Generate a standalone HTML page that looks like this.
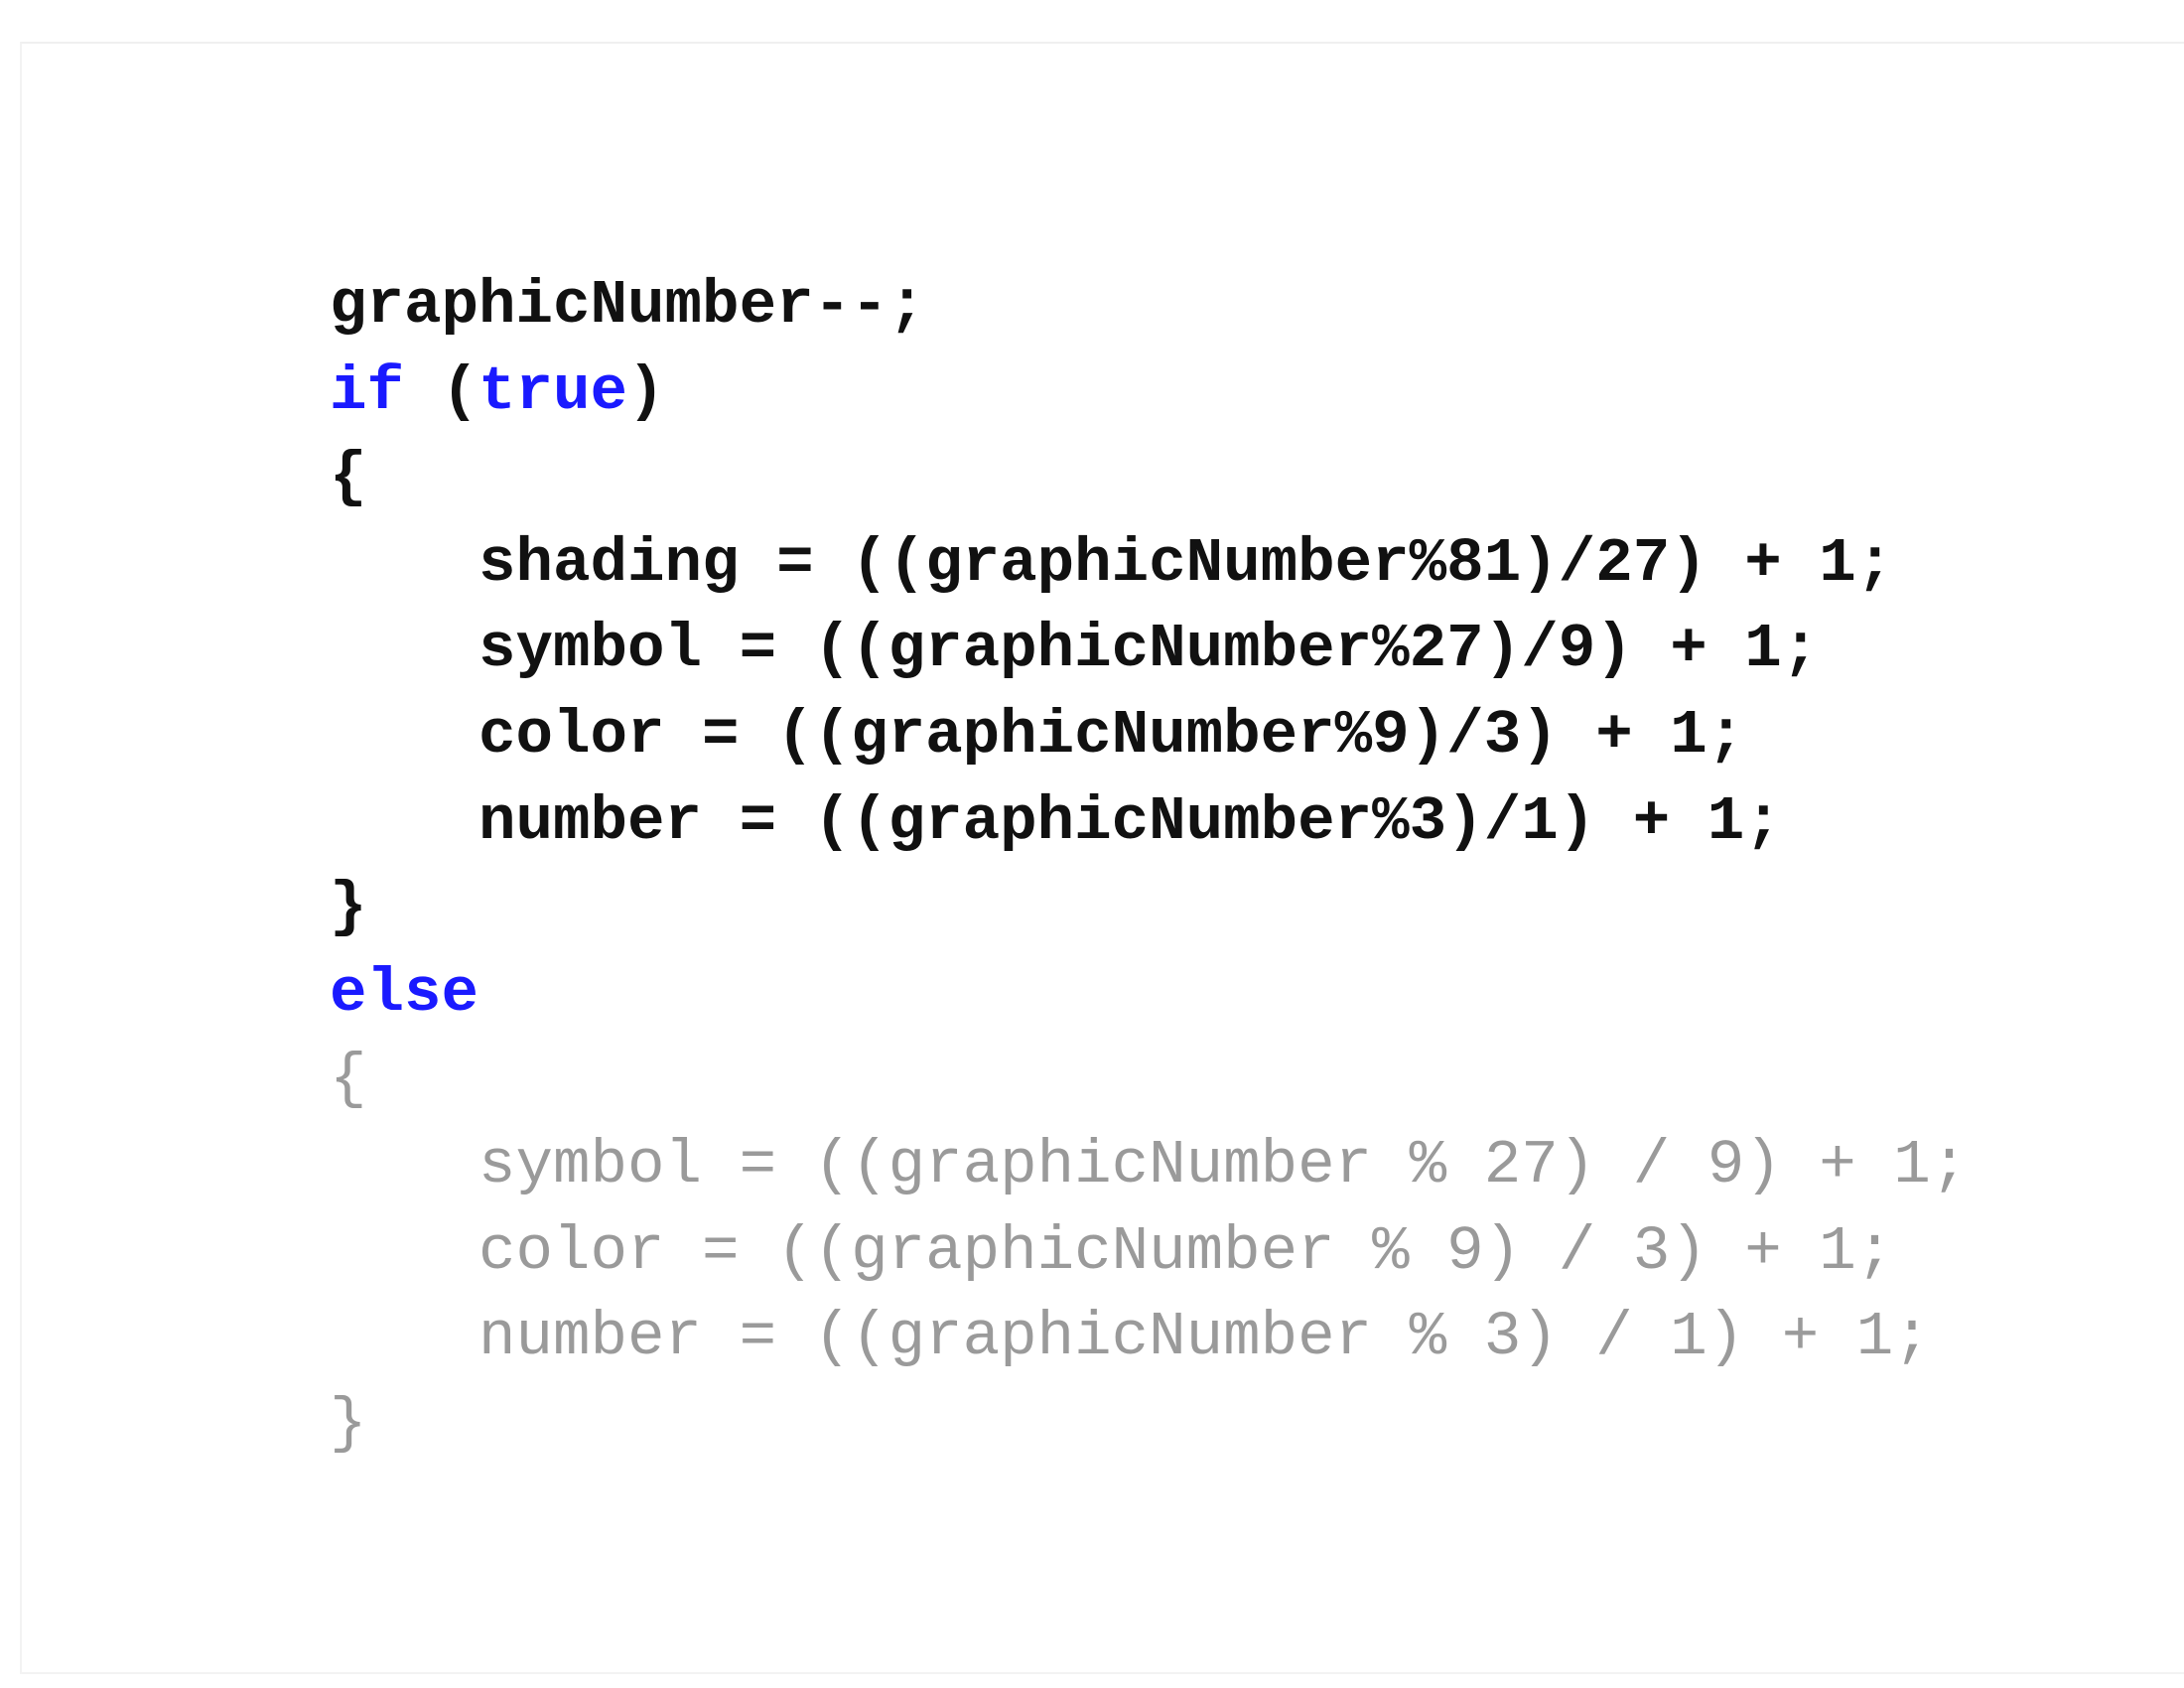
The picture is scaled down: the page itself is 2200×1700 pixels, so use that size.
<!DOCTYPE html>
<html><head><style>
html,body{margin:0;padding:0;background:#fff;width:2200px;height:1700px;overflow:hidden}
.frame{position:absolute;left:20px;top:42px;width:2200px;height:1640px;border-top:2px solid #f0f0f0;border-left:2px solid #f3f3f3;border-bottom:2px solid #f3f3f3}
pre{position:absolute;left:332px;top:265px;margin:0;font-family:"Liberation Mono",monospace;font-size:62.5px;line-height:86.6px;color:#111;font-weight:bold}
.k{color:#1a1aff}
.c{color:#9a9a9a;font-weight:normal}
</style></head><body>
<div class="frame"></div>
<pre>graphicNumber--;
<span class="k">if</span> (<span class="k">true</span>)
{
    shading = ((graphicNumber%81)/27) + 1;
    symbol = ((graphicNumber%27)/9) + 1;
    color = ((graphicNumber%9)/3) + 1;
    number = ((graphicNumber%3)/1) + 1;
}
<span class="k">else</span>
<span class="c">{
    symbol = ((graphicNumber % 27) / 9) + 1;
    color = ((graphicNumber % 9) / 3) + 1;
    number = ((graphicNumber % 3) / 1) + 1;
}</span></pre>
</body></html>
